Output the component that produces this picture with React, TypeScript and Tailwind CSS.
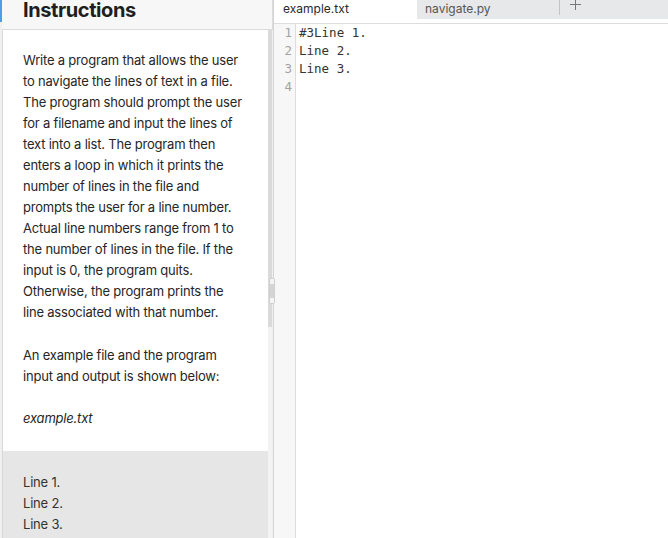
import React from "react";

const paragraph1 =
  "Write a program that allows the user to navigate the lines of text in a file. The program should prompt the user for a filename and input the lines of text into a list. The program then enters a loop in which it prints the number of lines in the file and prompts the user for a line number. Actual line numbers range from 1 to the number of lines in the file. If the input is 0, the program quits. Otherwise, the program prints the line associated with that number.";

const codeLines = ["#3Line 1.", "Line 2.", "Line 3.", ""];

const App: React.FC = () => {
  return (
    <div className="flex h-[538px] w-[668px] overflow-hidden bg-white font-['Inter',sans-serif]">
      {/* instructions panel */}
      <div className="relative flex w-[273px] shrink-0 flex-col bg-[#f0f0f0] pl-[2px]">
        <div className="absolute left-0 top-0 h-[22px] w-[2px] bg-[#4d9ee6]" />
        <div className="h-[30px] shrink-0 border-b border-r border-[#dcdcdc] bg-[#f7f7f7] pl-[21px]">
          <h1 className="text-[20px] font-bold leading-[20px] tracking-[-0.4px] text-[#1e1e1e]">
            Instructions
          </h1>
        </div>
        <div className="flex min-h-0 flex-1 border-l border-[#d8d8d8]">
          <div className="flex w-[265px] shrink-0 flex-col bg-white text-[13px] leading-[21px] tracking-[-0.2px] text-[#262626]">
            <div className="pl-[20px] pr-[22px] pt-[20px]">
              <p>{paragraph1}</p>
              <p className="mt-[22px]">
                An example file and the program input and output is shown below:
              </p>
              <p className="mt-[21px] italic">example.txt</p>
            </div>
            <div className="mt-[22px] flex-1 bg-[#e6e6e6] px-[20px] pt-[21px] text-[#333]">
              <div>Line 1.</div>
              <div>Line 2.</div>
              <div>Line 3.</div>
            </div>
          </div>
          <div className="relative w-[4px] shrink-0 bg-[#f3f3f3]">
            <div className="h-[297px] w-[4px] bg-[#dadada]" />
            <div className="absolute left-[1px] top-[248px] flex h-[26px] w-[6px] flex-col rounded-[2px] border border-[#cfcfcf] bg-[#d4d4d4]">
              <div className="h-[5px] bg-[#f4f4f4]" />
              <div className="flex-1" />
              <div className="h-[5px] bg-[#f4f4f4]" />
            </div>
          </div>
        </div>
      </div>

      {/* editor */}
      <div className="flex min-w-0 flex-1 flex-col border-l border-[#d4d4d4]">
        <div className="flex h-[24px] shrink-0 border-b border-[#dedede] text-[12px] leading-[17px]">
          <div className="w-[143px] bg-white pl-[9px] text-[#2a2a2a]">example.txt</div>
          <div className="flex h-[19px] flex-1 items-start bg-[#e7e8ea]">
            <div className="h-[15px] w-[143px] border-r border-[#c4c4c4] pl-[8px] text-[#555]">
              navigate.py
            </div>
            <svg
              className="ml-[10px] mt-[-1px]"
              width="11"
              height="11"
              viewBox="0 0 11 11"
              fill="none"
              stroke="#777"
              strokeWidth="1"
            >
              <path d="M5.5 0V11M0 5.5H11" />
            </svg>
          </div>
        </div>
        <div className="flex flex-1 font-['DejaVu_Sans_Mono',monospace] text-[12.5px] leading-[18px]">
          <div className="w-[22px] shrink-0 border-r border-[#dddddd] bg-[#f7f7f7] pr-[3px] text-right text-[#a3a3a3]">
            {codeLines.map((_, i) => (
              <div key={i}>{i + 1}</div>
            ))}
          </div>
          <div className="flex-1 pl-[3px] text-[#333]">
            {codeLines.map((l, i) => (
              <div key={i} className="h-[18px] whitespace-pre">
                {l}
              </div>
            ))}
          </div>
        </div>
      </div>
    </div>
  );
};

export default App;
